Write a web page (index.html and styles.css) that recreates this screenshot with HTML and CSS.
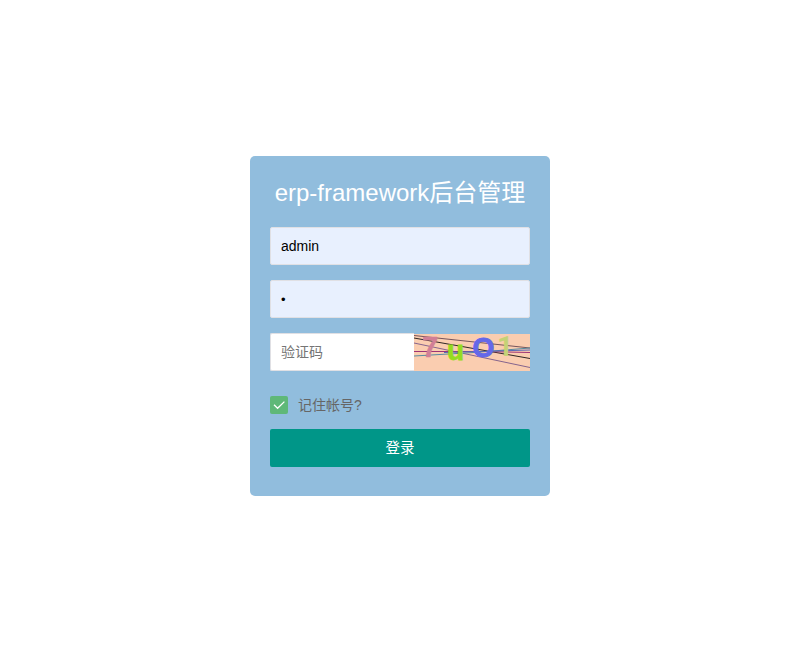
FILE: index.html
```html
<!DOCTYPE html>
<html lang="zh-CN">
<head>
<meta charset="utf-8">
<title>erp-framework后台管理</title>
<link rel="stylesheet" href="styles.css">
</head>
<body>
<form class="login">
  <h1 class="title">erp-framework后台管理</h1>
  <input class="field" type="text" value="admin">
  <input class="field password" type="password" value="1">
  <div class="captcha-row">
    <input class="field" type="text" placeholder="验证码">
    <svg class="captcha" viewBox="0 0 116 37" width="116" height="37">
      <rect width="116" height="37" fill="#facdb0"/>
      <g fill="none" stroke-width="1">
        <path d="M0 1.5L116 14" stroke="#76545b"/>
        <path d="M0 4L116 24.5" stroke="#302725"/>
        <path d="M0 9L116 33.5" stroke="#85648d"/>
        <path d="M0 17.5H70L116 18.5" stroke="#9d3275"/>
        <path d="M0 22L60 18.5L116 14" stroke="#568ba1"/>
        <path d="M30 18.5L116 16" stroke="#5669b7"/>
      </g>
      <text class="glyph" x="8" y="23" fill="#d17f96" stroke="#d17f96" stroke-width=".4" font-size="29">7</text>
      <text class="glyph" x="33" y="25.5" fill="#96dc20" stroke="#96dc20" stroke-width=".8" font-size="28">u</text>
      <text class="glyph" x="58.6" y="22.6" fill="#6468e9" stroke="#6468e9" stroke-width="1" font-size="28">O</text>
      <text class="glyph one" x="83" y="22" fill="#c4d276" font-size="28">1</text>
    </svg>
  </div>
  <label class="remember">
    <span class="check"><svg viewBox="0 0 18 18" width="18" height="18"><path d="M4 8.8L7.6 12.3L14.4 5.6" fill="none" stroke="#fff" stroke-width="1.3"/></svg></span>
    <span>记住帐号?</span>
  </label>
  <button class="submit" type="button">登录</button>
</form>
</body>
</html>
```

FILE: styles.css
```css
* { box-sizing: border-box; }
body {
  margin: 0;
  background: #fff;
  font-family: "Liberation Sans", "Noto Sans CJK SC", sans-serif;
  font-size: 14px;
}
.login {
  width: 300px;
  height: 340px;
  margin: 156px 0 0 250px;
  padding: 19px 20px 0;
  border-radius: 5px;
  background: #91bddd;
}
.title {
  margin: 0 -10px 16px;
  color: #fff;
  font-size: 24px;
  font-weight: 400;
  line-height: 36px;
  text-align: center;
  white-space: nowrap;
}
.field {
  display: block;
  width: 100%;
  height: 38px;
  margin: 0 0 15px;
  padding: 0 0 0 10px;
  border: 1px solid #e0e0e4;
  border-radius: 2px;
  background: #e8f0fe;
  color: #000;
  font: inherit;
  outline: none;
}
.password { font-size: 13px; }
.captcha-row {
  display: flex;
  height: 38px;
}
.captcha-row .field {
  width: 144px;
  margin: 0;
  border-right: 0;
  border-radius: 2px 0 0 2px;
  background: #fff;
}
.field::placeholder { color: #757575; }
.captcha {
  display: block;
  margin-top: 1px;
  overflow: visible;
}
.glyph {
  font-family: "Liberation Sans", sans-serif;
  font-weight: 700;
}
.one { font-family: Roboto, sans-serif; }
.remember {
  display: flex;
  align-items: center;
  gap: 10px;
  height: 18px;
  margin: 25px 0 15px;
  color: #666;
  line-height: 18px;
}
.check {
  width: 18px;
  height: 18px;
  border-radius: 2px;
  background: #5fb878;
}
.check svg { display: block; }
.submit {
  display: block;
  width: 100%;
  height: 38px;
  padding: 0 0 1px;
  border: 0;
  border-radius: 2px;
  background: #009688;
  color: #fff;
  font: inherit;
  font-size: 14.5px;
  line-height: 36px;
}
```
